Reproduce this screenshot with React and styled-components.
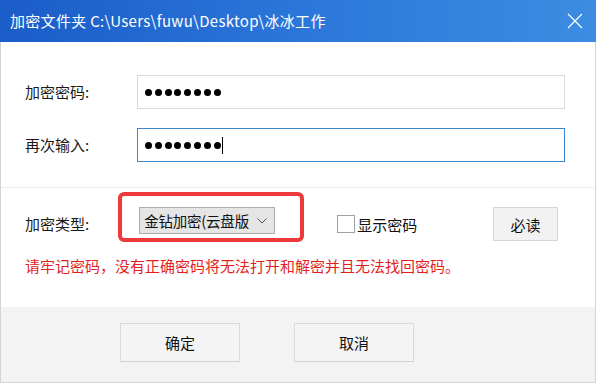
import React from 'react'
import styled, { createGlobalStyle } from 'styled-components'

const GlobalStyle = createGlobalStyle`
  html, body {
    margin: 0;
    padding: 0;
    background: #ffffff;
  }
  * {
    box-sizing: border-box;
  }
`

const FONT = `"Noto Sans CJK SC", "Noto Sans", sans-serif`

function Dots({ count }) {
  return (
    <DotRow>
      {Array.from({ length: count }).map((_, i) => (
        <Dot key={i} />
      ))}
    </DotRow>
  )
}

function App() {
  return (
    <Window>
      <GlobalStyle />
      <TitleBar>
        <Title>加密文件夹 C:\Users\fuwu\Desktop\冰冰工作</Title>
        <CloseButton aria-label="关闭">
          <svg width="16" height="16" viewBox="0 0 16 16">
            <path d="M1 1 L15 15 M15 1 L1 15" stroke="#ffffff" strokeWidth="1.2" fill="none" />
          </svg>
        </CloseButton>
      </TitleBar>

      <Body>
        <PasswordSection>
          <Label>加密密码:</Label>
          <Field>
            <Dots count={8} />
          </Field>
          <Label>再次输入:</Label>
          <Field focused>
            <Dots count={8} />
            <Caret />
          </Field>
        </PasswordSection>

        <OptionSection>
          <OptionRow>
            <Label>加密类型:</Label>
            <SelectWrap>
              <Select>
                <SelectText>金钻加密(云盘版</SelectText>
                <svg width="10" height="6" viewBox="0 0 10 6">
                  <path d="M0.5 0.5 L5 5 L9.5 0.5" stroke="#555" strokeWidth="1" fill="none" />
                </svg>
              </Select>
              <Highlight />
            </SelectWrap>
            <CheckGroup>
              <CheckBox />
              <span>显示密码</span>
            </CheckGroup>
            <SmallButton>必读</SmallButton>
          </OptionRow>
          <Warning>请牢记密码，没有正确密码将无法打开和解密并且无法找回密码。</Warning>
        </OptionSection>
      </Body>

      <Footer>
        <DialogButton>确定</DialogButton>
        <DialogButton>取消</DialogButton>
      </Footer>
    </Window>
  )
}

export default App

const Window = styled.div`
  width: 596px;
  height: 383px;
  display: flex;
  flex-direction: column;
  font-family: ${FONT};
  color: #1a1a1a;
  overflow: hidden;
`

const TitleBar = styled.div`
  height: 42px;
  flex: none;
  display: flex;
  align-items: center;
  justify-content: space-between;
  padding: 0 13px 0 10px;
  background: linear-gradient(to right, #1a5cc8 0%, #2b76d9 50%, #3c8ce2 100%);
`

const Title = styled.div`
  color: #ffffff;
  font-size: 15px;
  line-height: 20px;
  letter-spacing: 0.3px;
`

const CloseButton = styled.div`
  width: 16px;
  height: 16px;
  display: flex;
  svg {
    display: block;
  }
`

const Body = styled.div`
  flex: 1;
  display: flex;
  flex-direction: column;
  background: #ffffff;
  border-left: 1px solid #d4d4d4;
  border-right: 1px solid #d4d4d4;
`

const PasswordSection = styled.div`
  display: grid;
  grid-template-columns: 112px 428px;
  row-gap: 19px;
  padding: 33px 0 25px 24px;
  border-bottom: 1px solid #ececec;
`

const Label = styled.div`
  font-size: 15px;
  line-height: 34px;
  height: 34px;
  color: #1a1a1a;
`

const Field = styled.div`
  height: 34px;
  display: flex;
  align-items: center;
  padding-left: 7px;
  border: 1px solid ${props => (props.focused ? '#3b86cc' : '#dadada')};
  background: #ffffff;
`

const DotRow = styled.div`
  display: flex;
  gap: 2.8px;
`

const Dot = styled.span`
  width: 7px;
  height: 7px;
  border-radius: 50%;
  background: #000000;
`

const Caret = styled.span`
  width: 1px;
  height: 17px;
  margin-left: 1px;
  background: #000000;
`

const OptionSection = styled.div`
  flex: 1;
  padding: 19px 37px 0 24px;
`

const OptionRow = styled.div`
  display: flex;
  align-items: flex-start;
`

const SelectWrap = styled.div`
  position: relative;
  margin-left: 50px;
`

const Select = styled.div`
  width: 136px;
  height: 27px;
  display: flex;
  align-items: center;
  padding: 0 0 0 4px;
  font-size: 15px;
  line-height: 27px;
  color: #111111;
  background: #e5e5e5;
  border: 1px solid #adadad;
  white-space: nowrap;
  overflow: hidden;

  svg {
    flex: none;
    margin-left: 8px;
  }
`

const SelectText = styled.span`
  font-size: 14.5px;
  letter-spacing: -0.2px;
`

const Highlight = styled.div`
  position: absolute;
  top: -15px;
  left: -21px;
  right: -29px;
  bottom: -8px;
  border: 4px solid #ee3a3d;
  border-radius: 6px;
  pointer-events: none;
`

const CheckGroup = styled.label`
  display: flex;
  align-items: center;
  gap: 2px;
  height: 34px;
  margin-left: 62px;
  font-size: 15px;
  color: #111111;
`

const CheckBox = styled.span`
  width: 18px;
  height: 18px;
  border: 1px solid #a0a0a0;
  background: #ffffff;
`

const SmallButton = styled.div`
  margin-left: auto;
  width: 65px;
  height: 34px;
  display: flex;
  align-items: center;
  justify-content: center;
  font-size: 15px;
  color: #111111;
  background: #f2f2f2;
  border: 1px solid #d6d6d6;
`

const Warning = styled.div`
  margin-top: 15px;
  font-size: 15px;
  line-height: 20px;
  color: #e41e1e;
  white-space: nowrap;
`

const Footer = styled.div`
  height: 76px;
  flex: none;
  display: flex;
  align-items: flex-start;
  gap: 54px;
  padding: 16px 0 0 119px;
  background: #f3f3f3;
  border: 1px solid #d4d4d4;
  border-top: none;
`

const DialogButton = styled.div`
  width: 120px;
  height: 39px;
  display: flex;
  align-items: center;
  justify-content: center;
  font-size: 15px;
  color: #111111;
  background: #f4f4f4;
  border: 1px solid #dadada;
  border-bottom-color: #d0d0d0;
`
